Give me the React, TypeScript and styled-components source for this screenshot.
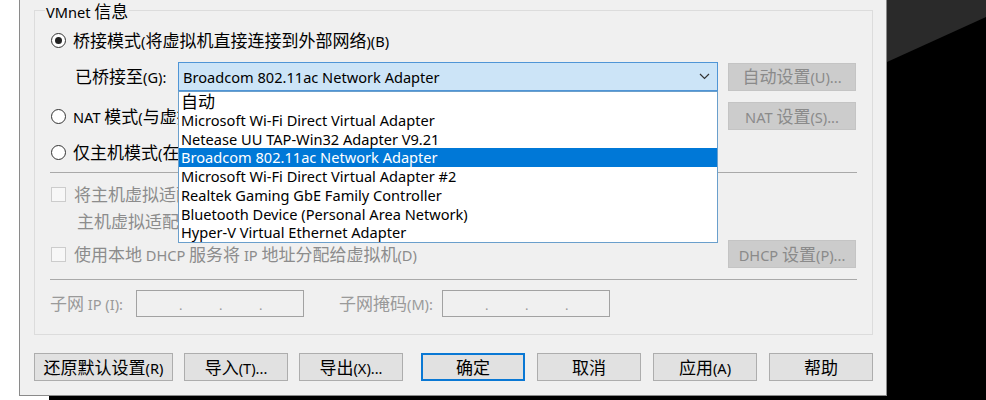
import React from "react";
import styled, { createGlobalStyle, css } from "styled-components";

const Global = createGlobalStyle`
  html, body { margin: 0; padding: 0; background: #fff; }
  body {
    font-family: "Noto Sans", "Noto Sans CJK SC", sans-serif;
    font-size: 14.6px;
    line-height: 20px;
    color: #000;
  }
  * { box-sizing: border-box; }
`;

const Han = styled.span`
  font-family: "Noto Sans CJK SC", sans-serif;
  font-size: 17px;
`;

const T = ({ children }: { children: string }) => {
  const parts = children.split(/([\u2E80-\u9FFF\uFF00-\uFFEF]+)/);
  return (
    <>
      {parts.map((p, i) => (i % 2 ? <Han key={i}>{p}</Han> : p))}
    </>
  );
};

const Screen = styled.div`
  position: relative;
  width: 986px;
  height: 400px;
  overflow: hidden;
  background: #fff;
`;

const Backdrop = styled.div`
  position: absolute;
  left: 49px;
  top: 0;
  right: 0;
  bottom: 0;
  background: #000;
`;

const Window = styled.div`
  position: relative;
  z-index: 1;
  margin-left: 19px;
  width: 868px;
  height: 396px;
  background: #f0f0f0;
  border: 1px solid #8a8a8a;
  border-top: none;
  padding: 0 13px 0 14px;
  display: flex;
  flex-direction: column;
`;

const Group = styled.fieldset`
  margin: 0;
  padding: 0;
  min-width: 0;
  border: 1px solid #dcdcdc;
`;

const Legend = styled.legend`
  margin-left: 10px;
  padding: 0 1px;
  height: 21px;
  line-height: 21px;
  color: #000;
  white-space: nowrap;
`;

const GroupBody = styled.div`
  display: flex;
  flex-direction: column;
  padding: 7px 16px 17px 16px;
`;

const Row = styled.div<{ $h: number; $mt: number }>`
  height: ${(p) => p.$h}px;
  margin-top: ${(p) => p.$mt}px;
  display: flex;
  align-items: center;
`;

const SplitRow = styled(Row)`
  display: grid;
  grid-template-columns: 1fr 128px;
  column-gap: 10px;
  align-items: center;
`;

const Option = styled.label<{ $disabled?: boolean }>`
  display: flex;
  align-items: center;
  gap: 7px;
  white-space: nowrap;
  line-height: 20px;
  color: ${(p) => (p.$disabled ? "#8c8c8c" : "#000")};
`;

const RadioCircle = styled.span<{ $checked?: boolean }>`
  position: relative;
  flex: none;
  width: 15px;
  height: 15px;
  border-radius: 50%;
  border: 1px solid #333;
  background: #fff;
  ${(p) =>
    p.$checked &&
    css`
      &::after {
        content: "";
        position: absolute;
        left: 3px;
        top: 3px;
        width: 7px;
        height: 7px;
        border-radius: 50%;
        background: #222;
      }
    `}
`;

const CheckBox = styled.span`
  flex: none;
  width: 15px;
  height: 15px;
  border: 1px solid #cccccc;
  background: #f7f7f7;
  margin-right: 1px;
`;

const SubText = styled.div`
  padding-left: 26px;
  color: #8c8c8c;
  white-space: nowrap;
  line-height: 20px;
`;

const BridgeLabel = styled.div`
  flex: none;
  width: 127px;
  padding-left: 24px;
  white-space: nowrap;
`;

const ComboWrap = styled.div`
  position: relative;
  flex: 1;
  height: 29px;
`;

const Combo = styled.div`
  height: 29px;
  display: flex;
  align-items: center;
  justify-content: space-between;
  padding: 0 7px 0 4px;
  background: #cce4f7;
  border: 1px solid #4f95d6;
  white-space: nowrap;
`;

const DropList = styled.ul`
  position: absolute;
  left: 0;
  right: 0;
  top: 100%;
  margin: 0;
  padding: 0;
  list-style: none;
  background: #fff;
  border: 1px solid #6a9fcc;
  z-index: 5;
`;

const DropItem = styled.li<{ $selected?: boolean }>`
  height: 18.75px;
  line-height: 18.75px;
  padding-left: 2px;
  white-space: nowrap;
  background: ${(p) => (p.$selected ? "#0078d7" : "#fff")};
  color: ${(p) => (p.$selected ? "#fff" : "#000")};
`;

const Separator = styled.div<{ $mt: number }>`
  height: 1px;
  margin: ${(p) => p.$mt}px -1px 0 -1px;
  background: #a9a9a9;
`;

const Button = styled.button<{ $w?: number; $focus?: boolean }>`
  width: ${(p) => (p.$w ? `${p.$w}px` : "100%")};
  height: 28px;
  padding: 0;
  margin: 0;
  font-family: inherit;
  font-size: 14.6px;
  line-height: 20px;
  color: #000;
  background: #e1e1e1;
  border: 1px solid #adadad;
  white-space: nowrap;
  ${(p) =>
    p.$focus &&
    css`
      border: 2px solid #0a78d4;
    `}
  &:disabled {
    background: #cccccc;
    border-color: #c4c4c4;
    color: #8a8a8a;
  }
`;

const FieldLabel = styled.div<{ $w: number }>`
  flex: none;
  width: ${(p) => p.$w}px;
  color: #9a9a9a;
  white-space: nowrap;
  margin-left: -1px;
`;

const IpBox = styled.div`
  flex: none;
  width: 168px;
  height: 27px;
  border: 1px solid #a2a2a2;
  background: #f0f0f0;
  display: flex;
  align-items: flex-end;
  gap: 37px;
  padding: 0 0 3px 42px;
`;

const IpDot = styled.span`
  width: 3px;
  color: #9a9a9a;
  font-size: 13px;
  line-height: 16px;
`;

const Spacer = styled.div<{ $w: number }>`
  flex: none;
  width: ${(p) => p.$w}px;
`;

const Footer = styled.div`
  margin-top: 18px;
  display: flex;
  justify-content: space-between;
`;

const ButtonGroup = styled.div<{ $gap: number }>`
  display: flex;
  gap: ${(p) => p.$gap}px;
`;

const adapters = [
  "自动",
  "Microsoft Wi-Fi Direct Virtual Adapter",
  "Netease UU TAP-Win32 Adapter V9.21",
  "Broadcom 802.11ac Network Adapter",
  "Microsoft Wi-Fi Direct Virtual Adapter #2",
  "Realtek Gaming GbE Family Controller",
  "Bluetooth Device (Personal Area Network)",
  "Hyper-V Virtual Ethernet Adapter",
];

const Chevron = () => (
  <svg width="11" height="7" viewBox="0 0 11 7">
    <polyline points="1,1 5.5,5.5 10,1" fill="none" stroke="#333" strokeWidth="1.2" />
  </svg>
);

const IpField = () => (
  <IpBox>
    <IpDot>.</IpDot>
    <IpDot>.</IpDot>
    <IpDot>.</IpDot>
  </IpBox>
);

export default function App() {
  return (
    <>
      <Global />
      <Screen>
        <Backdrop>
          <svg width="937" height="400" viewBox="0 0 937 400">
            <polygon points="838,0 937,0 937,17 838,62" fill="#2a2a2a" />
          </svg>
        </Backdrop>
        <Window>
          <Group>
            <Legend>
              <T>VMnet 信息</T>
            </Legend>
            <GroupBody>
              <Row $h={24} $mt={0}>
                <Option>
                  <RadioCircle $checked />
                  <span>
                    <T>桥接模式(将虚拟机直接连接到外部网络)(B)</T>
                  </span>
                </Option>
              </Row>
              <SplitRow $h={29} $mt={10}>
                <Row $h={29} $mt={0}>
                  <BridgeLabel>
                    <T>已桥接至(G):</T>
                  </BridgeLabel>
                  <ComboWrap>
                    <Combo>
                      <span>Broadcom 802.11ac Network Adapter</span>
                      <Chevron />
                    </Combo>
                    <DropList>
                      {adapters.map((a, i) => (
                        <DropItem key={a} $selected={i === 3}>
                          <T>{a}</T>
                        </DropItem>
                      ))}
                    </DropList>
                  </ComboWrap>
                </Row>
                <Button disabled>
                  <T>自动设置(U)...</T>
                </Button>
              </SplitRow>
              <SplitRow $h={28} $mt={11}>
                <Option>
                  <RadioCircle />
                  <span>
                    <T>NAT 模式(与虚拟机共享主机的 IP 地址)(N)</T>
                  </span>
                </Option>
                <Button disabled>
                  <T>NAT 设置(S)...</T>
                </Button>
              </SplitRow>
              <Row $h={24} $mt={10}>
                <Option>
                  <RadioCircle />
                  <span>
                    <T>仅主机模式(在专用网络内连接虚拟机)(H)</T>
                  </span>
                </Option>
              </Row>
              <Separator $mt={8} />
              <Row $h={24} $mt={9}>
                <Option $disabled>
                  <CheckBox />
                  <span>
                    <T>将主机虚拟适配器连接到此网络(V)</T>
                  </span>
                </Option>
              </Row>
              <Row $h={24} $mt={3}>
                <SubText>
                  <T>主机虚拟适配器名称: VMware 网络适配器 VMnet0</T>
                </SubText>
              </Row>
              <SplitRow $h={28} $mt={7}>
                <Option $disabled>
                  <CheckBox />
                  <span>
                    <T>使用本地 DHCP 服务将 IP 地址分配给虚拟机(D)</T>
                  </span>
                </Option>
                <Button disabled>
                  <T>DHCP 设置(P)...</T>
                </Button>
              </SplitRow>
              <Separator $mt={11} />
              <Row $h={27} $mt={10}>
                <FieldLabel $w={86}>
                  <T>子网 IP (I):</T>
                </FieldLabel>
                <IpField />
                <Spacer $w={36} />
                <FieldLabel $w={103}>
                  <T>子网掩码(M):</T>
                </FieldLabel>
                <IpField />
              </Row>
            </GroupBody>
          </Group>
          <Footer>
            <ButtonGroup $gap={11}>
              <Button $w={139}>
                <T>还原默认设置(R)</T>
              </Button>
              <Button $w={104}>
                <T>导入(T)...</T>
              </Button>
              <Button $w={104}>
                <T>导出(X)...</T>
              </Button>
            </ButtonGroup>
            <ButtonGroup $gap={12}>
              <Button $w={104} $focus>
                <T>确定</T>
              </Button>
              <Button $w={104}>
                <T>取消</T>
              </Button>
              <Button $w={104}>
                <T>应用(A)</T>
              </Button>
              <Button $w={104}>
                <T>帮助</T>
              </Button>
            </ButtonGroup>
          </Footer>
        </Window>
      </Screen>
    </>
  );
}
